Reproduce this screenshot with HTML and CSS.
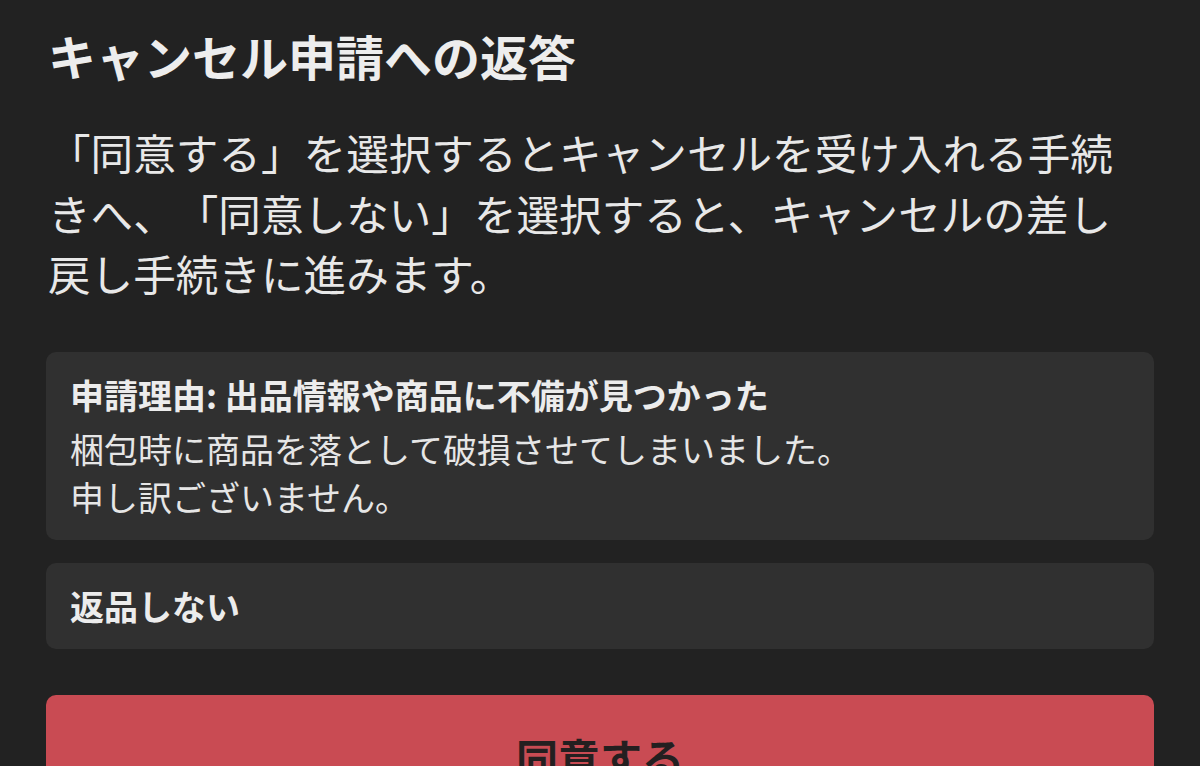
FILE: index.html
```html
<!DOCTYPE html>
<html lang="ja">
<head>
<meta charset="utf-8">
<title>キャンセル申請への返答</title>
<link rel="stylesheet" href="styles.css">
</head>
<body>
<main class="page">
  <h1 class="title">キャンセル申請への返答</h1>
  <p class="lead">「同意する」を選択するとキャンセルを受け入れる手続きへ、「同意しない」を選択すると、キャンセルの差し戻し手続きに進みます。</p>
  <section class="card">
    <div class="card-title">申請理由: 出品情報や商品に不備が見つかった</div>
    <div class="card-body">梱包時に商品を落として破損させてしまいました。<br>申し訳ございません。</div>
  </section>
  <section class="card">
    <div class="card-title">返品しない</div>
  </section>
  <button class="agree" type="button">同意する</button>
</main>
</body>
</html>
```

FILE: styles.css
```css
html, body {
  margin: 0;
  padding: 0;
  background: #222222;
  height: 100%;
  overflow: hidden;
}
body {
  font-family: "Noto Sans CJK JP", "Noto Sans", sans-serif;
  color: #ececec;
  text-spacing-trim: space-all;
}
.page {
  padding: 25px 46px 0;
  display: flex;
  flex-direction: column;
}
.title {
  margin: 0;
  padding: 0 2px;
  font-size: 48px;
  line-height: 60px;
  font-weight: 700;
  color: #ededed;
}
.lead {
  margin: 37px 0 0;
  padding: 0 2px;
  font-size: 42.6px;
  line-height: 60.5px;
  font-weight: 400;
  color: #e8e8e8;
}
.card {
  margin-top: 23px;
  background: #303030;
  border-radius: 10px;
  padding: 19px 24px;
  display: flex;
  flex-direction: column;
  gap: 6px;
}
.lead + .card {
  margin-top: 48px;
}
.card-title {
  font-size: 34px;
  line-height: 48px;
  font-weight: 700;
  color: #ececec;
}
.card-body {
  font-size: 34px;
  line-height: 48px;
  font-weight: 400;
  color: #e6e6e6;
}
.agree {
  margin-top: 46px;
  background: #c94b53;
  border: none;
  border-radius: 10px;
  padding: 32px 0;
  font-family: "Noto Sans CJK JP", "Noto Sans", sans-serif;
  font-size: 42px;
  line-height: 60px;
  font-weight: 700;
  color: #241f20;
  text-align: center;
  width: 100%;
}
```
